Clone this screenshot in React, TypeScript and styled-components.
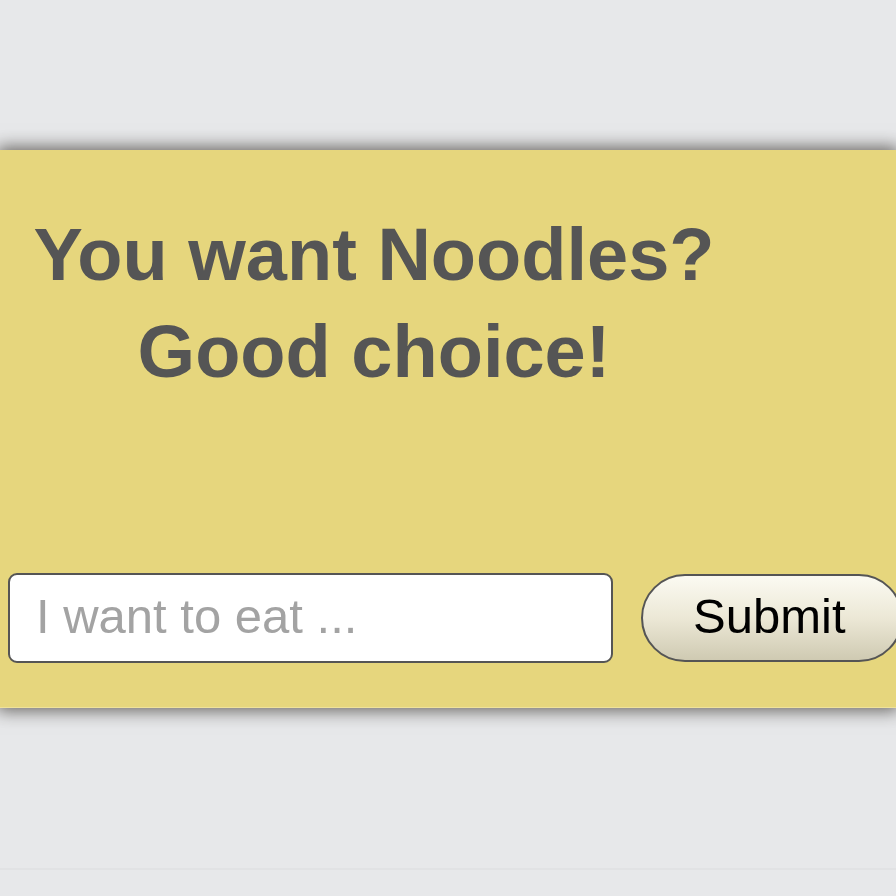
import React from "react";
import styled, { createGlobalStyle } from "styled-components";

const Global = createGlobalStyle`
  html, body { margin: 0; padding: 0; background: #e7e8ea; }
  body { font-family: "Liberation Sans", Arial, sans-serif; height: 896px; overflow: hidden; }
`;

const Page = styled.div`
  height: 896px;
  display: flex;
  flex-direction: column;
`;

const Panel = styled.section`
  margin-top: 150px;
  height: 558px;
  box-sizing: border-box;
  background: #e6d67d;
  box-shadow: 0 0 16px 3px rgba(35, 30, 25, 0.65);
  border-bottom: 1px solid #efe29a;
  padding-top: 56px;
  display: flex;
  flex-direction: column;
  overflow: hidden;
`;

const Title = styled.h1`
  margin: 0;
  width: 748px;
  text-align: center;
  font-family: "Liberation Sans", Arial, sans-serif;
  font-weight: bold;
  font-size: 74px;
  line-height: 97px;
  color: #555555;
`;

const Form = styled.form`
  margin-top: 173px;
  display: flex;
  align-items: center;
  gap: 28px;
  padding-left: 8px;
  width: 920px;
`;

const Input = styled.input`
  box-sizing: border-box;
  width: 605px;
  height: 90px;
  border: 2px solid #555;
  border-radius: 9px;
  background: #fff;
  padding: 0 0 4px 26px;
  font-family: "Liberation Sans", Arial, sans-serif;
  font-size: 49px;
  color: #333;
  outline: none;
  &::placeholder { color: #a3a3a3; }
`;

const Button = styled.button`
  box-sizing: border-box;
  width: 262px;
  height: 88px;
  border: 2px solid #555;
  border-radius: 44px;
  background: linear-gradient(#fbfaf2 0%, #ece8d6 50%, #cfcab2 100%);
  font-family: "Liberation Sans", Arial, sans-serif;
  font-size: 49px;
  color: #000;
  padding: 0 0 4px 50px;
  text-align: left;
`;

const Rule = styled.div`
  margin-top: 160px;
  height: 2px;
  background: #e1e2e4;
`;

export default function App() {
  return (
    <Page>
      <Global />
      <Panel>
        <Title>
          You want Noodles?
          <br />
          Good choice!
        </Title>
        <Form onSubmit={(e) => e.preventDefault()}>
          <Input placeholder="I want to eat ..." />
          <Button type="submit">Submit</Button>
        </Form>
      </Panel>
      <Rule />
    </Page>
  );
}
